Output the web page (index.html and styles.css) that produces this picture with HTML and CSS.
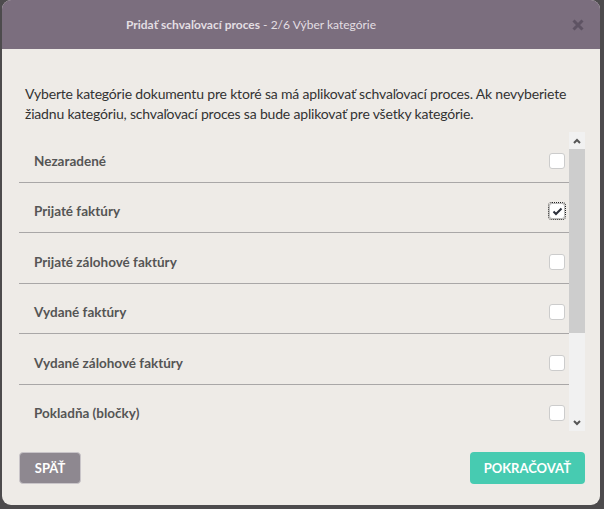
FILE: index.html
```html
<!DOCTYPE html>
<html lang="sk">
<head>
    <meta charset="UTF-8">
    <title>Pridať schvaľovací proces</title>
    <link rel="stylesheet" href="styles.css">
</head>
<body>

    <div class="modal">
        <div class="modal-header">
            <span class="modal-title"><b>Pridať schvaľovací proces</b> - 2/6 Výber kategórie</span>
            <span class="modal-close"><svg width="12" height="12" viewBox="0 0 12 12"><path d="M1.5 1.5 L10.5 10.5 M10.5 1.5 L1.5 10.5" stroke="#5e5363" stroke-width="3"/></svg></span>
        </div>

        <div class="modal-body">
            <p class="intro">Vyberte kategórie dokumentu pre ktoré sa má aplikovať schvaľovací proces. Ak nevyberiete žiadnu kategóriu, schvaľovací proces sa bude aplikovať pre všetky kategórie.</p>

            <div class="list-box">
                <div class="list">
                    <label class="row"><span>Nezaradené</span><span class="check"></span></label>
                    <label class="row"><span>Prijaté faktúry</span><span class="check focus"><svg width="11" height="9" viewBox="0 0 11 9"><path d="M1.5 4.5 L4 7 L9.5 1.5" fill="none" stroke="#2b2f3a" stroke-width="2"/></svg></span></label>
                    <label class="row"><span>Prijaté zálohové faktúry</span><span class="check"></span></label>
                    <label class="row"><span>Vydané faktúry</span><span class="check"></span></label>
                    <label class="row"><span>Vydané zálohové faktúry</span><span class="check"></span></label>
                    <label class="row"><span>Pokladňa (bločky)</span><span class="check"></span></label>
                    <label class="row"><span>Interné doklady</span><span class="check"></span></label>
                </div>
                <div class="scrollbar">
                    <div class="sb-btn"><svg width="8" height="6" viewBox="0 0 8 6"><path d="M1 5 L4 2 L7 5" fill="none" stroke="#555" stroke-width="2"/></svg></div>
                    <div class="sb-track"><div class="sb-thumb"></div></div>
                    <div class="sb-btn"><svg width="8" height="6" viewBox="0 0 8 6"><path d="M1 1 L4 4 L7 1" fill="none" stroke="#555" stroke-width="2"/></svg></div>
                </div>
            </div>

            <div class="actions">
                <button class="btn btn-back">Späť</button>
                <button class="btn btn-next">Pokračovať</button>
            </div>
        </div>
    </div>

</body>
</html>
```

FILE: styles.css
```css
html, body {
    margin: 0;
    height: 100%;
}
body {
    font-family: Lato, "Liberation Sans", sans-serif;
    background-color: #4d4b4d;
    padding: 0 4px 4px 2px;
    box-sizing: border-box;
}
.modal {
    width: 598px;
    height: 505px;
    background-color: #eeebe7;
    border-radius: 9px;
    overflow: hidden;
    display: flex;
    flex-direction: column;
}
.modal-header {
    height: 49px;
    flex: none;
    background-color: #7b6e7e;
    display: flex;
    align-items: center;
    padding: 0 16px 0 0;
}
.modal-title {
    flex: 1;
    text-align: center;
    padding-right: 72px;
    color: #e3dfe3;
    font-size: 12px;
}
.modal-close {
    display: flex;
    margin-top: 1px;
}
.modal-body {
    flex: 1;
    padding: 0 15px 0 17px;
    display: flex;
    flex-direction: column;
}
.intro {
    margin: 35px 0 8px 6px;
    font-size: 14px;
    letter-spacing: -0.18px;
    line-height: 20px;
    color: #333;
}
.list-box {
    height: 299px;
    display: flex;
}
.list {
    flex: 1;
    overflow: hidden;
}
.row {
    display: flex;
    align-items: center;
    justify-content: space-between;
    box-sizing: border-box;
    height: 50.5px;
    padding: 8px 4px 0 15px;
    border-bottom: 1px solid #a9a7a7;
    font-size: 13.5px;
    font-weight: bold;
    color: #555;
}
.check {
    width: 14px;
    height: 14px;
    background-color: #fff;
    border: 1px solid #ccc;
    border-radius: 3px;
    display: flex;
    align-items: center;
    justify-content: center;
}
.check.focus {
    outline: 1px dotted #222;
    border-color: #bbb;
}
.scrollbar {
    width: 16px;
    display: flex;
    flex-direction: column;
    background-color: #f1f1f1;
}
.sb-btn {
    height: 17px;
    display: flex;
    align-items: center;
    justify-content: center;
}
.sb-track {
    flex: 1;
}
.sb-thumb {
    height: 184px;
    background-color: #cdcdcd;
}
.actions {
    display: flex;
    justify-content: space-between;
    margin-top: 21px;
}
.btn {
    height: 32px;
    padding: 0 14px;
    border: none;
    border-radius: 4px;
    color: #fff;
    font-family: inherit;
    font-size: 13px;
    line-height: 16px;
    font-weight: bold;
    text-transform: uppercase;
}
.btn-back {
    background-color: #8e8890;
    border: 1px solid #c9c5c9;
    min-width: 62px;
}
.btn-next {
    background-color: #47cbb1;
}
```
